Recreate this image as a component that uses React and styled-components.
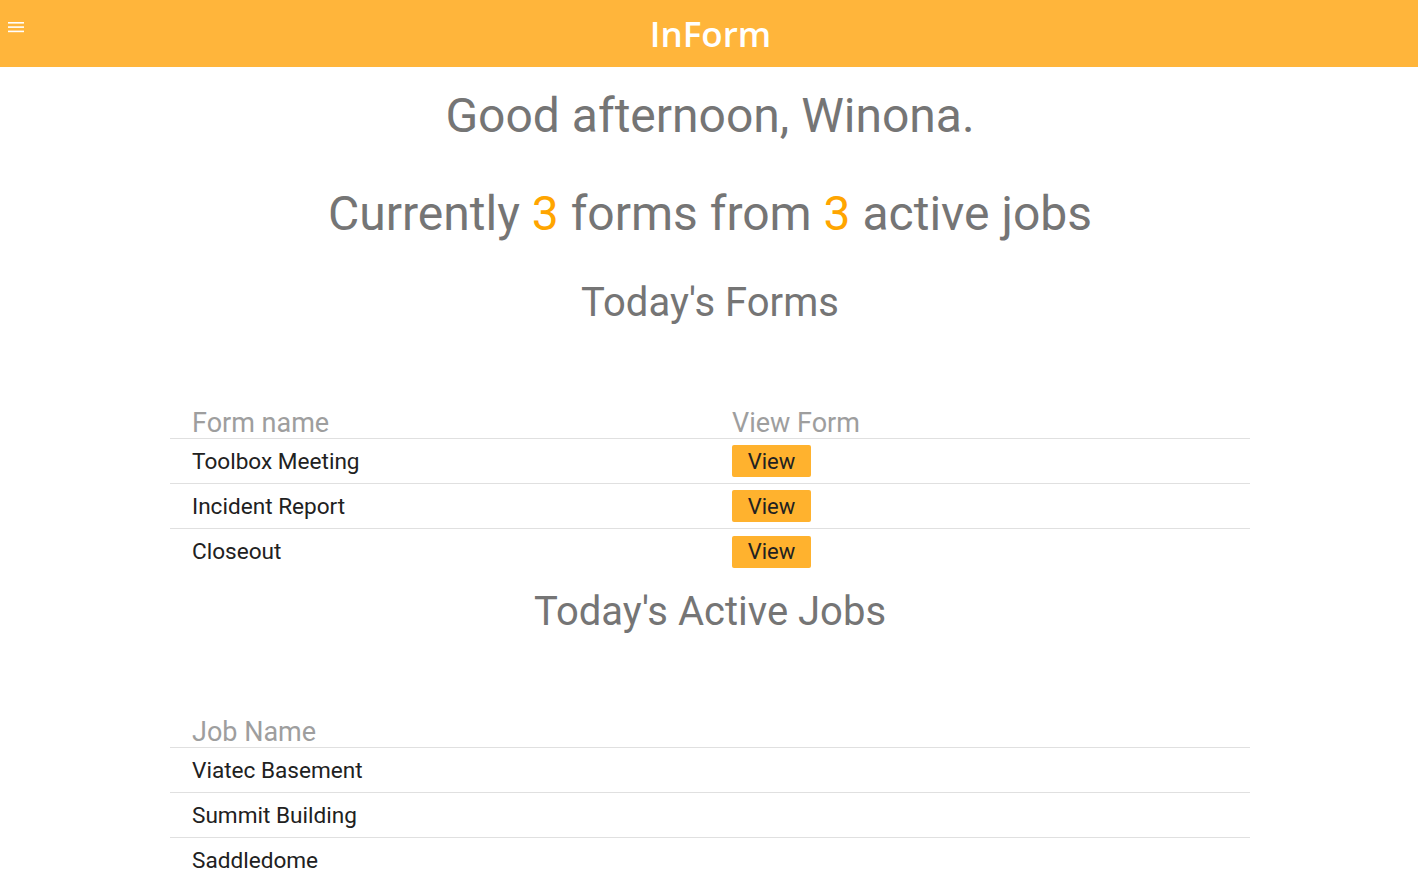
import React from "react";
import styled, { createGlobalStyle } from "styled-components";

const Global = createGlobalStyle`
  html, body { margin: 0; padding: 0; background: #fff; }
  body { font-family: Roboto, "Noto Sans", sans-serif; color: #757575; }
  * { box-sizing: border-box; }
`;

const TopBar = styled.header`
  height: 67px;
  background: #ffb53b;
  display: grid;
  grid-template-columns: 1fr auto 1fr;
  align-items: center;
`;

const MenuButton = styled.button`
  justify-self: start;
  align-self: start;
  margin: 20px 0 0 7px;
  padding: 0;
  background: none;
  border: 0;
  width: 18px;
  height: 14px;
  cursor: pointer;
  display: flex;
`;

const Brand = styled.h1`
  margin: 0 0 0 3px;
  font-family: "Open Sans", "Noto Sans", sans-serif;
  font-weight: 600;
  font-size: 35px;
  color: #fff;
`;

const Main = styled.main`
  display: flex;
  flex-direction: column;
  align-items: center;
  padding-left: 2px;
`;

const Greeting = styled.h2`
  margin: 20px 0 0;
  font-weight: 400;
  font-size: 48px;
  line-height: 58px;
  color: #757575;
`;

const Summary = styled.p`
  margin: 40px 0 0;
  font-size: 48px;
  line-height: 58px;
  color: #757575;
`;

const Count = styled.span`
  color: #ffa500;
`;

const SectionTitle = styled.h3`
  margin: ${(p) => p.$top}px 0 0;
  font-weight: 400;
  font-size: 40px;
  line-height: 48px;
  color: #757575;
`;

const Table = styled.div`
  width: 1080px;
  margin-top: ${(p) => p.$top}px;
  display: grid;
  grid-template-columns: ${(p) => p.$cols};
`;

const HeadCell = styled.div`
  padding: 0 0 0 22px;
  height: 32px;
  font-size: 27px;
  line-height: 32px;
  color: #9e9e9e;
  border-bottom: 1px solid #e0e0e0;
  white-space: nowrap;
`;

const Cell = styled.div`
  padding: 0 0 0 22px;
  height: 45px;
  display: flex;
  align-items: center;
  font-size: 22.6px;
  color: #212121;
  border-bottom: ${(p) => (p.$last ? "0" : "1px solid #e0e0e0")};
`;

const ViewButton = styled.button`
  width: 79px;
  height: 32px;
  border: 0;
  border-radius: 2px;
  background: #ffb22e;
  color: #212121;
  font-family: Roboto, sans-serif;
  font-size: 22px;
  padding: 0;
  cursor: pointer;
`;

const forms = ["Toolbox Meeting", "Incident Report", "Closeout"];
const jobs = ["Viatec Basement", "Summit Building", "Saddledome"];

export default function App() {
  return (
    <>
      <Global />
      <TopBar>
        <MenuButton aria-label="Menu">
          <svg width="18" height="14" viewBox="0 0 18 14">
            <rect x="1" y="2" width="16" height="1.6" fill="#fff" />
            <rect x="1" y="6.3" width="16" height="1.6" fill="#fff" />
            <rect x="1" y="10.6" width="16" height="1.6" fill="#fff" />
          </svg>
        </MenuButton>
        <Brand>InForm</Brand>
        <div />
      </TopBar>
      <Main>
        <Greeting>Good afternoon, Winona.</Greeting>
        <Summary>
          Currently <Count>3</Count> forms from <Count>3</Count> active jobs
        </Summary>
        <SectionTitle $top={36}>Today's Forms</SectionTitle>
        <Table $top={80} $cols="1fr 1fr">
          <HeadCell>Form name</HeadCell>
          <HeadCell>View Form</HeadCell>
          {forms.map((f, i) => (
            <React.Fragment key={f}>
              <Cell $last={i === forms.length - 1}>{f}</Cell>
              <Cell $last={i === forms.length - 1}>
                <ViewButton>View</ViewButton>
              </Cell>
            </React.Fragment>
          ))}
        </Table>
        <SectionTitle $top={14}>Today's Active Jobs</SectionTitle>
        <Table $top={80} $cols="1fr">
          <HeadCell>Job Name</HeadCell>
          {jobs.map((j, i) => (
            <Cell key={j} $last={i === jobs.length - 1}>{j}</Cell>
          ))}
        </Table>
      </Main>
    </>
  );
}
